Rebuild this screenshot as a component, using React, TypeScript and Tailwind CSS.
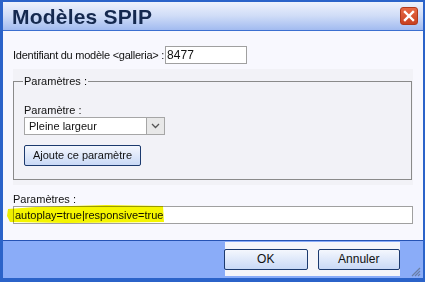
const font = "font-['Liberation_Sans',Arial,sans-serif]"

function WinButton({ label, className }: { label: string; className: string }) {
  return (
    <button
      className={`${className} flex items-center justify-center border border-[#1c3a6e] rounded-[2px] bg-gradient-to-b from-[#f4f7fd] to-[#c9d9f6] text-[11px] text-[#111]`}
    >
      {label}
    </button>
  )
}

export default function App() {
  return (
    <div className={`${font} w-[425px] h-[282px] bg-[#2b63c9] pl-[3px] pr-[2px] pt-[2px] pb-[4px] flex flex-col`}>
      {/* title bar */}
      <div className="h-[28px] flex items-center justify-between bg-gradient-to-b from-[#eef2fc] via-[#cfdcf7] to-[#a2bbf0]">
        <span className="pl-[9px] pt-[2px] text-[21px] font-bold tracking-[0.2px] text-[#15294f]">
          Modèles SPIP
        </span>
        <div className="mr-[5px] w-[18px] h-[18px] rounded-[3px] bg-gradient-to-b from-[#e86a45] to-[#c8401f] border border-[#b0391c] flex items-center justify-center">
          <svg width="12" height="12" viewBox="0 0 12 12">
            <path d="M2 2 L10 10 M10 2 L2 10" stroke="white" strokeWidth="2.4" strokeLinecap="square" />
          </svg>
        </div>
      </div>
      <div className="h-[1px] bg-[#3b6fd0]" />

      {/* content */}
      <div className="h-[209px] bg-[#f8f8fe] px-[10px] pt-[15px] text-[11px] text-[#111]">
        <div className="flex items-center h-[18px]">
          <span className="whitespace-nowrap tracking-[-0.25px]">Identifiant du modèle &lt;galleria&gt; :</span>
          <div className="ml-[1px] w-[82px] h-[18px] border border-[#a0a0a0] bg-white pl-[1px] flex items-center text-[12px]">8477</div>
        </div>

        <div className="mt-[5px] w-[400px] h-[116px] bg-[#f2f2f7] pt-[5px]">
          <fieldset className="w-[399px] h-[106px] border border-[#8a8a8a] pl-[10px] pt-[15px]">
            <legend className="px-[1px] ml-[-1px] leading-[14px]">Paramètres :</legend>
            <div className="leading-[14px]">Paramètre :</div>
            <div className="w-[141px] h-[18px] border border-[#a6a6a6] bg-white flex">
              <span className="flex-1 pl-[4px] flex items-center">Pleine largeur</span>
              <div className="w-[18px] border-l border-[#a6a6a6] bg-[#e8e8e8] flex items-center justify-center">
                <svg width="9" height="6" viewBox="0 0 9 6">
                  <path d="M1 1 L4.5 4.5 L8 1" stroke="#555" strokeWidth="1.3" fill="none" />
                </svg>
              </div>
            </div>
            <WinButton label="Ajoute ce paramètre" className="mt-[10px] w-[117px] h-[21px]" />
          </fieldset>
        </div>

        <div className="mt-[7px] leading-[14px]">Paramètres :</div>
        <div className="relative w-[400px] h-[18px] border border-[#a0a0a0] bg-white pl-[1px] flex items-center">
          autoplay=true|responsive=true
          {/* highlighter mark */}
          <svg className="absolute left-[-8px] top-[-2px] mix-blend-multiply" width="160" height="19" viewBox="0 0 160 19">
            <path d="M2 4 L30 2 L100 0 L157 1 L158 17 L60 18 L4 17 L1 11 Z" fill="#f5f500" />
          </svg>
        </div>
      </div>
      <div className="h-[1px] bg-[#2653b4]" />

      {/* footer */}
      <div className="flex-1 bg-[#8aacf8] relative flex">
        <div className="ml-[222px] mt-[1px] w-[175px] h-[34px] bg-[#f5f5f9] flex items-center gap-[10px]">
          <WinButton label="OK" className="ml-[-1px] w-[84px] h-[21px] text-[12px]" />
          <WinButton label="Annuler" className="w-[83px] h-[21px] text-[12px]" />
        </div>
        <svg className="absolute right-[2px] bottom-[1px]" width="12" height="12" viewBox="0 0 12 12">
          <path d="M11 3 L3 11 M11 6 L6 11 M11 9 L9 11" stroke="#6a7ea6" strokeWidth="1.2" />
        </svg>
      </div>
    </div>
  )
}
